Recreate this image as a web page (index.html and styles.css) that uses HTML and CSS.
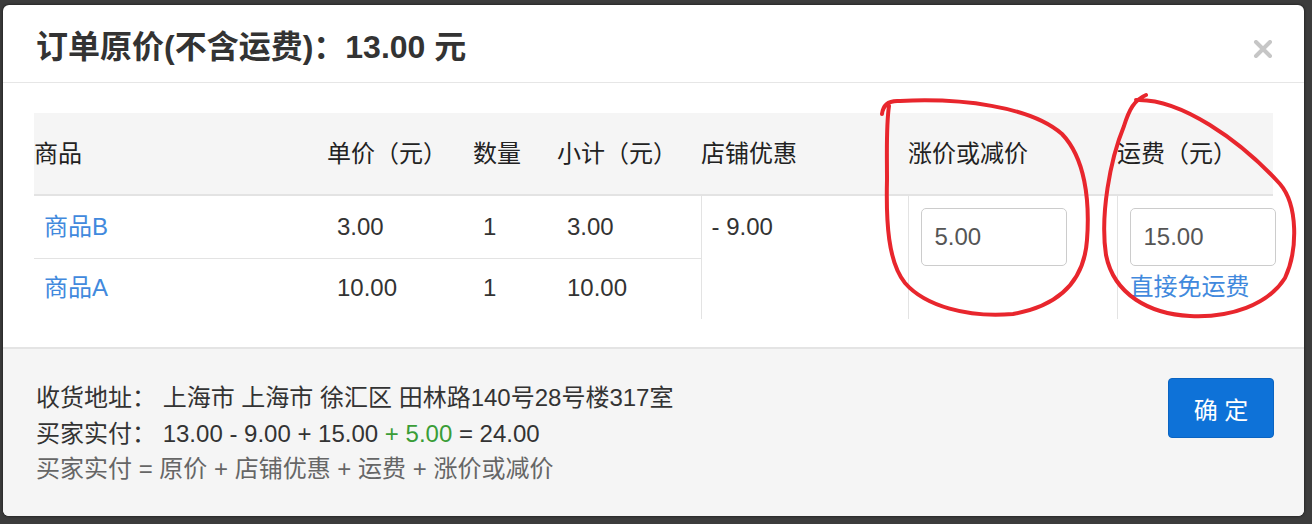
FILE: index.html
```html
<!DOCTYPE html>
<html lang="zh-CN">
<head>
  <meta charset="UTF-8">
  <title>修改订单价格</title>
  <link rel="stylesheet" href="styles.css">
</head>
<body>
  <div class="modal">
    <div class="modal-header">
      <h3 class="modal-title">订单原价(不含运费)：13.00 元</h3>
      <span class="close">
        <svg width="20" height="18" viewBox="0 0 20 18"><path d="M3 2 L17 16 M17 2 L3 16" stroke="#c6c6c6" stroke-width="4" stroke-linecap="round"/></svg>
      </span>
    </div>

    <div class="modal-body">
      <table class="price-table">
        <colgroup>
          <col style="width: 293px">
          <col style="width: 146px">
          <col style="width: 84px">
          <col style="width: 144px">
          <col style="width: 207px">
          <col style="width: 209px">
          <col style="width: 156px">
        </colgroup>
        <thead>
          <tr>
            <th>商品</th>
            <th>单价（元）</th>
            <th>数量</th>
            <th>小计（元）</th>
            <th>店铺优惠</th>
            <th>涨价或减价</th>
            <th>运费（元）</th>
          </tr>
        </thead>
        <tbody>
          <tr class="first">
            <td><a href="#">商品B</a></td>
            <td>3.00</td>
            <td>1</td>
            <td>3.00</td>
            <td rowspan="2" class="span-cell">- 9.00</td>
            <td rowspan="2" class="span-cell input-cell"><input type="text" value="5.00"></td>
            <td rowspan="2" class="span-cell input-cell">
              <input type="text" value="15.00">
              <a href="#" class="free-link">直接免运费</a>
            </td>
          </tr>
          <tr class="second">
            <td><a href="#">商品A</a></td>
            <td>10.00</td>
            <td>1</td>
            <td>10.00</td>
          </tr>
        </tbody>
      </table>
    </div>

    <div class="modal-footer">
      <div class="summary">
        <p>收货地址： 上海市 上海市 徐汇区 田林路140号28号楼317室</p>
        <p>买家实付： 13.00 - 9.00 + 15.00 <span class="plus">+ 5.00</span> = 24.00</p>
        <p class="hint">买家实付 = 原价 + 店铺优惠 + 运费 + 涨价或减价</p>
      </div>
      <button type="button" class="btn-ok">确 定</button>
    </div>
  </div>

  <!-- hand drawn marks -->
  <svg class="marks" width="1312" height="524" viewBox="0 0 1312 524">
    <path d="M882,114 C883,105 888,100 900,101 C960,98 1030,106 1062,134 C1085,158 1090,200 1087,240 C1084,282 1058,306 1013,314 C968,318 925,306 905,283 C888,262 886,222 887,180 C887,150 886,126 889,106" />
    <path d="M1136,100 C1180,98 1240,140 1280,184 C1298,205 1298,250 1285,278 C1268,305 1230,318 1190,316 C1150,314 1114,295 1106,255 C1100,215 1110,160 1124,126 C1129,110 1134,100 1146,95" />
  </svg>
</body>
</html>
```

FILE: styles.css
```css
/* backdrop */
html, body {
  margin: 0;
  height: 100%;
}

body {
  background-color: #3c3c3c;
  padding: 5px 0 0 3px;
  box-sizing: border-box;
  overflow: hidden;
  font-family: "Liberation Sans", "Noto Sans CJK SC", sans-serif;
  color: #333;
}

/* dialog */
.modal {
  width: 1301px;
  height: 511px;
  background-color: #fff;
  border-radius: 6px;
  box-shadow: 0 0 3px rgba(0, 0, 0, 0.7);
  overflow: hidden;
  display: flex;
  flex-direction: column;
}

.modal-header {
  height: 77px;
  padding: 0 31px 0 33px;
  border-bottom: 1px solid #e6e6e6;
  display: flex;
  align-items: center;
  justify-content: space-between;
}

.modal-title {
  margin: 0;
  font-size: 32px;
  font-weight: bold;
  color: #333;
}

.close {
  display: flex;
  margin-top: 10px;
}

.modal-body {
  padding: 30px 31px 28px;
}

/* price table */
.price-table {
  border-collapse: collapse;
  table-layout: fixed;
  width: 1239px;
  font-size: 24px;
  line-height: 28px;
}

.price-table th {
  background-color: #f5f5f5;
  text-align: left;
  font-weight: normal;
  color: #222;
  padding: 27px 0 26px;
  border-bottom: 2px solid #e3e3e3;
  white-space: nowrap;
}

.price-table td {
  padding: 17px 0 17px 10px;
  vertical-align: top;
  color: #333;
  white-space: nowrap;
}

.price-table tr.second td {
  padding: 15px 0 17px 10px;
}

.price-table tr.first td {
  border-bottom: 1px solid #e3e3e3;
}

.price-table tr.first td.span-cell {
  border-bottom: none;
  border-left: 1px solid #e3e3e3;
}

.price-table td.input-cell {
  padding: 12px 0 0 12px;
}

.price-table a {
  color: #4189dd;
  text-decoration: none;
}

.price-table input {
  display: block;
  width: 146px;
  height: 58px;
  box-sizing: border-box;
  padding: 0 13px;
  border: 1px solid #ccc;
  border-radius: 5px;
  font-family: inherit;
  font-size: 24px;
  color: #555;
}

.free-link {
  display: block;
  margin-top: 7px;
}

/* footer */
.modal-footer {
  flex: 1;
  background-color: #f5f5f5;
  border-top: 2px solid #e4e4e4;
  padding: 29px 30px 0 33px;
  display: flex;
  justify-content: space-between;
  align-items: flex-start;
}

.summary p {
  margin: 0;
  font-size: 24px;
  line-height: 35.5px;
  color: #333;
}

.summary p:first-child {
  margin-top: 2px;
}

.summary .plus {
  color: #3a9d37;
}

.summary .hint {
  color: #666;
}

.btn-ok {
  width: 106px;
  height: 60px;
  background-color: #0e72d8;
  border: 1px solid #0a64c2;
  border-radius: 4px;
  color: #fff;
  font-family: inherit;
  font-size: 24px;
  cursor: pointer;
}

/* annotation overlay */
.marks {
  position: absolute;
  left: 0;
  top: 0;
  pointer-events: none;
}

.marks path {
  fill: none;
  stroke: #e8262d;
  stroke-width: 4;
  stroke-linecap: round;
  stroke-linejoin: round;
}
```
